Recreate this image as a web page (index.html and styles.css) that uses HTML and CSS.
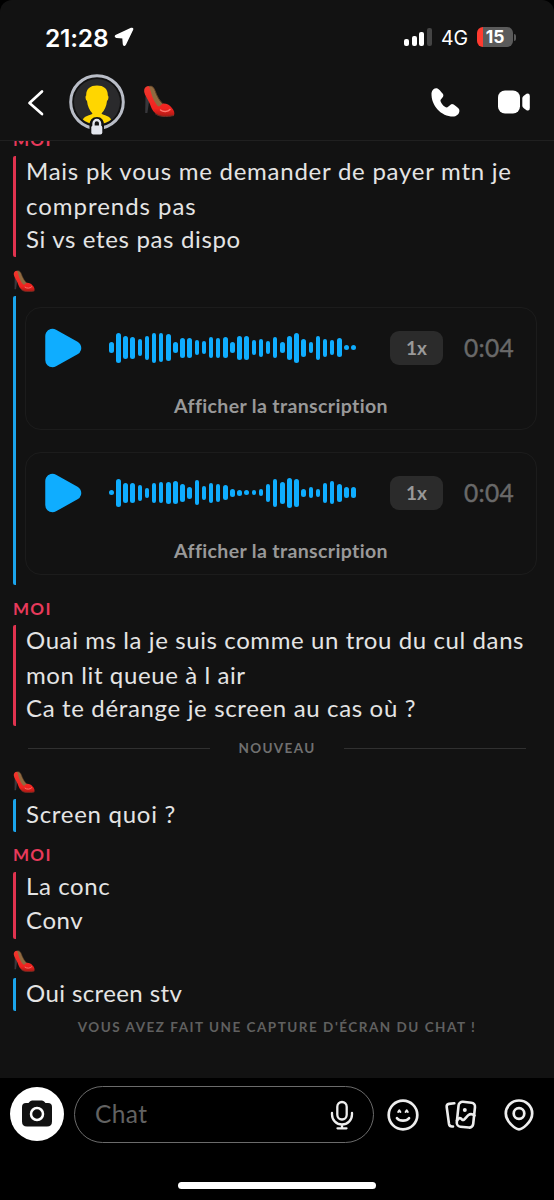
FILE: index.html
```html
<!DOCTYPE html>
<html lang="fr">
<head>
<meta charset="utf-8">
<title>Chat</title>
<link rel="stylesheet" href="styles.css">
</head>
<body>
<svg class="defs" width="0" height="0" aria-hidden="true">
  <defs>
    <linearGradient id="red" x1="0" y1="0" x2="0" y2="1"><stop offset="0" stop-color="#f0382e"/><stop offset=".75" stop-color="#f0231f"/><stop offset="1" stop-color="#a81914"/></linearGradient>
    <symbol id="heel" viewBox="0 0 32 32">
      <path d="M2.500 11 2.200 28H4.400L6.300 15z" fill="#37373b"/>
      <path d="M5 1.500C8 0 10 1.500 11.500 4.500C13.500 10.500 16 16 21 20L15 25C10 20 6 12 5 1.500z" fill="#8f6a40"/>
      <path d="M6.500 1.200C10 .8 11 3 12 5.500C14 11 16.500 16.500 21.500 20" fill="none" stroke="#6d4a2c" stroke-width=".8"/>
      <path d="M5 1C2 1.500 .8 4 1.200 7C2 11 4.500 13.500 6.500 18C8.500 23 9.500 27 15 30C20 32 27 31.500 31 30.500C32 28 31 25 28.500 22.500C26.500 20 24 18.500 20.500 18.500C18.500 18.500 17.500 21.500 15.500 21.500C11.500 18.500 8.500 10 7 4C6.500 2 6 1 5 1z" fill="url(#red)"/>
      <path d="M17.500 25C20 27 25 27 27 24.500" fill="none" stroke="#ff776e" stroke-width="1.400" stroke-linecap="round"/>
      <path d="M12 28.500C16 32 23 32 31 30.500" fill="none" stroke="#713128" stroke-width="1"/>
    </symbol>
    <symbol id="play" viewBox="0 0 38 40"><path d="M8.500 8V32L30 20z" fill="#0fadff" stroke="#0fadff" stroke-width="14.500" stroke-linejoin="round"/></symbol>
  </defs>
</svg>
<div class="phone">
  <header class="top">
    <div class="status">
      <span class="clock">21:28</span>
      <svg class="loc" width="20" height="20" viewBox="0 0 20 20"><path d="M17.300 1.500 2.300 8.500Q.5 9.600 2.500 10.200L9 10.700 9.500 17Q10 19.200 11.300 17.300L18.500 2.500Q19 1 17.300 1.500z" fill="#fff" stroke="#fff" stroke-width="1.500" stroke-linejoin="round"/></svg>
      <span class="grow"></span>
      <span class="signal"><i class="s1"></i><i class="s2"></i><i class="s3"></i><i class="s4"></i></span>
      <span class="net">4G</span>
      <span class="battery">15</span><i class="nub"></i>
    </div>
    <div class="bar">
      <svg class="back" width="18" height="28" viewBox="0 0 18 28"><path d="M15 2.500 2.500 14 15 25" fill="none" stroke="#fff" stroke-width="2.700" stroke-linecap="round" stroke-linejoin="round"/></svg>
      <svg class="avatar" width="56" height="62" viewBox="0 0 56 62">
        <defs><clipPath id="face"><circle cx="28" cy="28" r="22.500"/></clipPath></defs>
        <circle cx="28" cy="28" r="23" fill="#2a2a2c"/>
        <g clip-path="url(#face)" fill="#ffd600"><path d="M28 11.500C21 11.500 17 15 17.200 21.500C16 22 16.500 26 18 27C18.500 32 20.500 36.500 23.500 39.500C22 41.500 14 41 13 48V54H43V48C42 41 34 41.500 32.500 39.500C35.500 36.500 37.500 32 38 27C39.500 26 40 22 38.800 21.500C39 15 35 11.500 28 11.500z"/></g>
        <circle cx="28" cy="28" r="26.300" fill="none" stroke="#b9bdc7" stroke-width="3"/>
        <path d="M21.500 51.500V60H34V51.500C34 45 31 44 28 44S21.500 45 21.500 51.500z" fill="#121212" stroke="#121212" stroke-width="2"/>
        <rect x="22.300" y="51.500" width="11" height="9" rx="2" fill="#e3e6ee"/>
        <path d="M24.500 53V49.500a3.300 3.500 0 0 1 6.600 0V53" fill="none" stroke="#e3e6ee" stroke-width="2.300"/>
      </svg>
      <svg class="name" width="32" height="32"><use href="#heel"/></svg>
      <span class="grow"></span>
      <svg class="phone-icon" width="31" height="31" viewBox="0 0 31 31"><path d="M1.500 6C2 2.500 4.500.8 7 1.200C8.500 1.500 11 4.500 13 7C14 9 13 10 10.500 13C10 15 14 20.500 17 20.500C19 19.500 20.500 17 22 17C24 17 27.500 20.500 29 22C30.500 25.500 27.500 29 24 29.500C11.500 30 1 19 1.500 6z" fill="#fff"/></svg>
      <svg class="video" width="34" height="26" viewBox="0 0 34 26"><rect x="1" y="1.500" width="22" height="23" rx="7" fill="#fff"/><path d="M25.300 9Q25.500 8 26.500 7L29.500 4.800Q32.800 3.500 32.800 7V19Q32.800 22.500 29.500 21.200L26.500 19Q25.500 18 25.300 17z" fill="#fff"/></svg>
    </div>
  </header>

  <main class="chat">
    <div class="who me first">MOI</div>
    <section class="block me b1">
      <div class="lines"><p class="two"><span class="t1">Mais pk vous me demander de payer mtn je</span><br><span class="t2">comprends pas</span></p><p><span class="t3">Si vs etes pas dispo</span></p></div>
    </section>
    <div class="who them"><svg width="22" height="22"><use href="#heel"/></svg></div>
    <section class="block them voice">
      <article class="card">
        <div class="player"><svg class="play" width="38" height="40"><use href="#play"/></svg><div class="wave" data-levels="11,30,23,22,17,24,30,29,27,11,20,20,15,13,21,20,21,11,24,24,15,18,13,21,11,24,30,18,11,24,18,15,19,5,5"></div><span class="speed">1x</span><span class="time">0:04</span></div>
        <div class="transcript">Afficher la transcription</div>
      </article>
      <article class="card">
        <div class="player"><svg class="play" width="38" height="40"><use href="#play"/></svg><div class="wave" data-levels="5,28,20,20,16,10,20,21,22,23,18,12,25,14,20,18,15,8,6,5,5,7,18,28,22,30,28,8,11,8,20,23,18,11,11"></div><span class="speed">1x</span><span class="time">0:04</span></div>
        <div class="transcript">Afficher la transcription</div>
      </article>
    </section>
    <div class="who me m2">MOI</div>
    <section class="block me b1">
      <div class="lines"><p class="two"><span>Ouai ms la je suis comme un trou du cul dans</span><br><span>mon lit queue à l air</span></p><p><span class="t6">Ca te dérange je screen au cas où ?</span></p></div>
    </section>
    <div class="divider"><span>NOUVEAU</span></div>
    <div class="who them h2"><svg width="22" height="22"><use href="#heel"/></svg></div>
    <section class="block them b3"><div class="lines"><p><span class="t7">Screen quoi ?</span></p></div></section>
    <div class="who me m3">MOI</div>
    <section class="block me b4"><div class="lines"><p><span>La conc</span></p><p><span>Conv</span></p></div></section>
    <div class="who them h3"><svg width="22" height="22"><use href="#heel"/></svg></div>
    <section class="block them b3"><div class="lines"><p><span class="t10">Oui screen stv</span></p></div></section>
    <div class="notice">VOUS AVEZ FAIT UNE CAPTURE D'ÉCRAN DU CHAT !</div>
  </main>

  <footer class="composer">
    <div class="tools">
      <svg class="cam" width="54" height="54" viewBox="0 0 54 54"><circle cx="27" cy="27" r="27" fill="#fff"/><path d="M12 20Q12 16 16 16H18.500Q20 13.500 22 13.500H32Q34 13.500 35.500 16H38Q42 16 42 20V34.500Q42 39.500 37 39.500H17Q12 39.500 12 34.500z" fill="#111"/><circle cx="27" cy="27" r="6" fill="none" stroke="#fff" stroke-width="2.500"/></svg>
      <div class="field"><span>Chat</span>
        <svg width="24" height="30" viewBox="0 0 24 30" fill="none" stroke="#eee" stroke-width="2.300" stroke-linecap="round"><rect x="7.300" y="2" width="9.400" height="17.500" rx="4.700"/><path d="M2 13v1.500a10 10 0 0 0 20 0V13M12 24.500v3M7.500 28.300h9"/></svg>
      </div>
      <svg class="smile" width="32" height="32" viewBox="0 0 32 32" fill="none" stroke="#eee" stroke-width="2.700" stroke-linecap="round" stroke-linejoin="round"><circle cx="16" cy="16" r="14.300"/><path d="M10 19.200C12.500 22.500 19.500 22.500 22 19.200"/><path d="M11.200 13 12.300 11.400 13.400 13M18.600 13 19.700 11.400 20.800 13" stroke-width="2"/></svg>
      <svg class="cards" width="32" height="30" viewBox="0 0 32 30" fill="none" stroke="#eee" stroke-width="2.600" stroke-linecap="round" stroke-linejoin="round"><path d="M9.300 3.300 4 3.900Q1.300 4.300 1.700 7L4 24Q4.400 26.500 7 26.500H8"/><rect x="12.600" y="2.200" width="16.500" height="25" rx="4" transform="rotate(6 21 15)"/><path d="M12 20.500C14 17.500 15.500 17.500 17 19.500C19 21.500 21 17 23.500 15C25.500 13.500 27.500 14 29.500 15.500"/><circle cx="19.800" cy="10" r="1" fill="#eee" stroke-width="2"/></svg>
      <svg class="pin" width="30" height="32" viewBox="0 0 30 32" fill="none" stroke="#eee" stroke-width="2.700"><path d="M15 30.300C12 30.300 1.800 23 1.800 14.500A13.200 13 0 0 1 28.200 14.500C28.200 23 18 30.300 15 30.300z"/><circle cx="15" cy="14.500" r="5.300"/></svg>
    </div>
    <div class="home"></div>
  </footer>
</div>
<script src="wave.js"></script>
</body>
</html>
```

FILE: wave.js
```js
// Builds one rounded bar per audio level.
document.querySelectorAll('.wave').forEach(function (wave) {
  wave.dataset.levels.split(',').forEach(function (level) {
    var bar = document.createElement('i');
    bar.style.height = level + 'px';
    wave.appendChild(bar);
  });
});
```

FILE: styles.css
```css
* { box-sizing: border-box; }
body { margin: 0; background: #000; }
p { margin: 0; }
.defs { display: block; }
.phone { width: 554px; height: 1200px; background: #121212; border-radius: 12px 12px 0 0; overflow: hidden; display: flex; flex-direction: column; font-family: Lato, "Open Sans", sans-serif; color: #e4e4e4; }
svg { flex: none; display: block; }
.grow { flex: 1; }

.top { height: 141px; flex: none; border-bottom: 1px solid #202020; }
.status { height: 74px; display: flex; align-items: center; padding-right: 39px; font-family: Inter, sans-serif; color: #fff; }
.clock { font-size: 24.500px; font-weight: 600; margin-left: 45px; width: 69px; line-height: 72px; padding-top: 1px; letter-spacing: -.2px; }
.signal { display: flex; gap: 2.700px; align-items: flex-end; height: 18px; margin-right: 9px; }
.signal i { width: 5px; border-radius: 2px; background: #fff; }
.signal .s1 { height: 7px; }
.signal .s2 { height: 10px; }
.signal .s3 { height: 14px; }
.signal .s4 { height: 18px; background: #444; }
.net { font-size: 19.500px; width: 27px; margin-right: 9px; padding-top: 1px; }
.battery { width: 36px; height: 20px; border-radius: 6px; background: linear-gradient(90deg, #ff3b30 5.500px, #5b5b5b 5.500px); font-size: 17.500px; font-weight: 700; line-height: 20px; text-align: center; }
.nub { width: 2px; height: 7px; margin-left: 1px; margin-right: -1px; border-radius: 0 2px 2px 0; background: #5b5b5b; }
.bar { height: 66px; display: flex; align-items: flex-start; padding: 0 23px 0 27px; }
.back { margin-top: 14.500px; }
.avatar { margin: 0 0 0 24px; }
.name { margin: 11px 0 0 18px; }
.phone-icon { margin: 13px 36px 0 0; }
.video { margin-top: 15px; }

.chat { height: 937px; flex: none; overflow: hidden; padding: 0 17px 0 13px; }
.who { height: 22px; }
.who.me { color: #e83a5b; font-size: 17px; font-weight: 700; letter-spacing: 1.300px; line-height: 22px; }
.first { margin-top: -12px; }
.block { border-left: 3px solid; border-radius: 2px; padding-left: 10px; display: flex; }
.block.me { border-color: #e0334f; }
.block.them { border-color: #1ba5ec; }
.b1 { margin-top: 5px; height: 101px; }
.b3 { height: 33px; margin-top: 5px; }
.b4 { height: 67px; margin-top: 6px; }
.lines { margin-top: -3px; font-size: 24px; }
.lines p { line-height: 34px; height: 34px; white-space: nowrap; }
.lines .two { line-height: 35px; height: 69px; }
.b3 .lines { margin-top: -2px; }
.lines span { letter-spacing: .6px; }
.lines .t1 { letter-spacing: .75px; }
.lines .t2 { letter-spacing: .97px; }
.lines .t3 { letter-spacing: .65px; }
.lines .t6 { letter-spacing: .65px; }
.lines .t7 { letter-spacing: .72px; }
.lines .t10 { letter-spacing: .4px; }
.b1 + .who.them { margin-top: 13px; }

.voice { margin-top: 4px; height: 289px; flex-direction: column; gap: 22px; padding: 11px 0 0 9px; }
.card { width: 512px; height: 123px; border: 1px solid #1c1c1c; border-radius: 16px; }
.player { display: flex; align-items: center; height: 79px; padding-left: 18px; }
.wave { width: 247px; height: 32px; margin-left: 27px; display: flex; justify-content: space-between; align-items: center; }
.wave i { width: 4.600px; border-radius: 2.500px; background: #0fadff; }
.speed { width: 53px; height: 34px; border-radius: 9px; background: #2b2b2b; color: #999; font-size: 19px; font-weight: 700; line-height: 33px; text-align: center; margin-left: 34px; }
.time { margin: -1px 0 0 21px; font-size: 24.500px; color: #696969; letter-spacing: .3px; -webkit-text-stroke: .4px #696969; }
.transcript { text-align: center; color: #999; font-size: 19.500px; font-weight: 700; line-height: 24px; margin-top: 7px; letter-spacing: .36px; }
.m2 { margin-top: 13px; }

.divider { display: flex; align-items: center; gap: 28px; height: 20px; margin: 12px 11px 0 15px; color: #707070; font-size: 13.500px; font-weight: 700; letter-spacing: 1.350px; }
.divider::before, .divider::after { content: ""; flex: 1; height: 1px; background: #303030; }
.h2 { margin-top: 13px; }
.h2 + .b3 { margin-top: 6px; }
.m3 { margin-top: 12px; }
.h3 { margin-top: 11px; }
.h3 + .b3 { margin-top: 6px; }
.notice { text-align: center; color: #606060; font-size: 13.500px; font-weight: 700; letter-spacing: 1.510px; line-height: 20px; margin: 6px 0 0 4px; }

.composer { height: 122px; flex: none; background: #000; }
.tools { display: flex; padding: 8px 0 0 10px; height: 105px; align-items: flex-start; }
.cam { margin-top: 1px; }
.field { width: 300px; height: 57px; margin-left: 10px; border: 1.500px solid #6b6b6b; border-radius: 29px; display: flex; justify-content: space-between; align-items: center; padding: 0 19px 0 20px; color: #626262; font-size: 24.500px; letter-spacing: .4px; }
.field span { margin-top: -2px; }
.smile { margin: 12.500px 0 0 12.500px; }
.cards { margin: 14px 0 0 26px; }
.pin { margin: 13px 0 0 27.500px; }
.home { width: 198px; height: 7px; border-radius: 4px; background: #fff; margin: -1px auto 0; }
```
